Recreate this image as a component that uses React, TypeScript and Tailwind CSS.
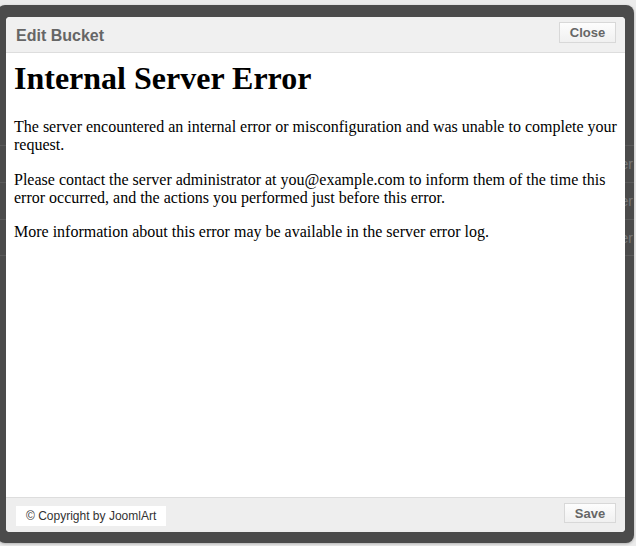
import React from 'react';

const paragraphs = [
  'The server encountered an internal error or misconfiguration and was unable to complete your request.',
  'Please contact the server administrator at you@example.com to inform them of the time this error occurred, and the actions you performed just before this error.',
  'More information about this error may be available in the server error log.',
];

// rows of the page table that shows through the backdrop on the right
const rows = ['er', 'er', 'er'];

const App = () => {
  return (
    <div className="w-[636px] h-[546px] overflow-hidden bg-[#ebebeb] pt-[5px] font-['Liberation_Sans',Arial,sans-serif]">
      <div className="relative -ml-[3px] w-[637px] h-[538px] rounded-[8px] bg-[#4b4b4b] pl-[9px] pr-[9px] pt-[12px] pb-[11px] shadow-[0_1px_3px_rgba(0,0,0,0.25)]">
        <div className="absolute inset-0 overflow-hidden rounded-[8px] flex flex-col">
          <div className="h-[140px] shrink-0" />
          {rows.map((r, i) => (
            <div
              key={i}
              className={`h-[37px] shrink-0 border-t border-[#5a5a5a] flex items-center justify-end pr-[1px] ${i === rows.length - 1 ? 'border-b' : ''}`}
            >
              <span className="text-[14px] leading-none text-[#777]">{r}</span>
            </div>
          ))}
        </div>

        <div className="relative z-10 flex flex-col h-full rounded-[4px] overflow-hidden bg-white">
          <div className="h-[36px] shrink-0 flex items-start justify-between bg-[#f0f0f0] border-b border-[#dddddd] pl-[10px] pr-[9px]">
            <span className="mt-[7px] text-[16px] font-bold text-[#666]">Edit Bucket</span>
            <button className="mt-[5px] w-[57px] h-[21px] border border-[#d8d8d8] bg-gradient-to-b from-[#fdfdfd] to-[#f0f0f0] text-[13px] font-bold text-[#666] leading-none">
              Close
            </button>
          </div>

          <div className="flex-1 px-[8px] pt-[7px] text-black font-['Liberation_Serif','Times_New_Roman',serif]">
            <h1 className="text-[32px] font-bold leading-[1.15] mb-[21px]">Internal Server Error</h1>
            {paragraphs.map((p, i) => (
              <p key={i} className="text-[16px] leading-[1.15] mb-[16px]">
                {p}
              </p>
            ))}
          </div>

          <div className="h-[35px] shrink-0 flex items-start justify-between bg-[#eeeeee] border-t border-[#dddddd] pl-[10px] pr-[9px]">
            <div className="mt-[8px] h-[20px] bg-white flex items-center px-[10px] whitespace-nowrap text-[12px] text-[#333]">
              © Copyright by JoomlArt
            </div>
            <button className="mt-[5px] w-[52px] h-[20px] border border-[#d8d8d8] bg-gradient-to-b from-[#fdfdfd] to-[#f0f0f0] text-[13px] font-bold text-[#666] leading-none">
              Save
            </button>
          </div>
        </div>
      </div>
    </div>
  );
};

export default App;
